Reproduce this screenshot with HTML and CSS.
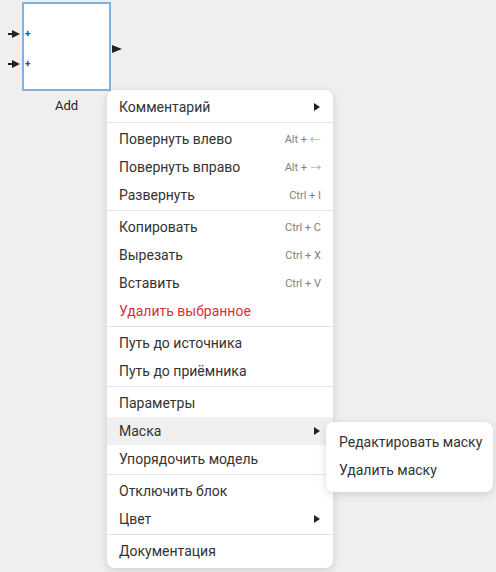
FILE: index.html
```html
<!DOCTYPE html>
<html>
<head>
<meta charset="utf-8">
<link rel="stylesheet" href="styles.css">
</head>
<body>
<div class="canvas">
  <div class="node">
    <div class="port port-in1"><span class="arrow-r"></span><span class="plus">+</span></div>
    <div class="port port-in2"><span class="arrow-r"></span><span class="plus">+</span></div>
    <div class="port port-out"><span class="arrow-r"></span></div>
    <div class="node-label">Add</div>
  </div>

  <div class="menu">
    <div class="item"><span>Комментарий</span><span class="tri"></span></div>
    <div class="sep"></div>
    <div class="item"><span>Повернуть влево</span><span class="kbd">Alt + <span class="ar">←</span></span></div>
    <div class="item"><span>Повернуть вправо</span><span class="kbd">Alt + <span class="ar">→</span></span></div>
    <div class="item"><span>Развернуть</span><span class="kbd">Ctrl + I</span></div>
    <div class="sep"></div>
    <div class="item"><span>Копировать</span><span class="kbd">Ctrl + C</span></div>
    <div class="item"><span>Вырезать</span><span class="kbd">Ctrl + X</span></div>
    <div class="item"><span>Вставить</span><span class="kbd">Ctrl + V</span></div>
    <div class="item danger"><span>Удалить выбранное</span></div>
    <div class="sep"></div>
    <div class="item"><span>Путь до источника</span></div>
    <div class="item"><span>Путь до приёмника</span></div>
    <div class="sep"></div>
    <div class="item"><span>Параметры</span></div>
    <div class="item active"><span>Маска</span><span class="tri"></span></div>
    <div class="item"><span>Упорядочить модель</span></div>
    <div class="sep"></div>
    <div class="item"><span>Отключить блок</span></div>
    <div class="item"><span>Цвет</span><span class="tri"></span></div>
    <div class="sep"></div>
    <div class="item"><span>Документация</span></div>
  </div>

  <div class="submenu">
    <div class="item"><span>Редактировать маску</span></div>
    <div class="item"><span>Удалить маску</span></div>
  </div>
</div>
</body>
</html>
```

FILE: styles.css
```css
html, body {
  margin: 0;
  padding: 0;
}
body {
  background: #efefef;
  font-family: Roboto, "Noto Sans", sans-serif;
  color: #333;
}
.canvas {
  position: relative;
  width: 496px;
  height: 572px;
  overflow: hidden;
}
.node {
  position: absolute;
  left: 22px;
  top: 2px;
  width: 85px;
  height: 85px;
  background: #fff;
  border: 2px solid #80b4de;
}
.port {
  position: absolute;
  display: flex;
  align-items: center;
  height: 10px;
}
.port-in1 { left: -12px; top: 25px; }
.port-in2 { left: -12px; top: 55px; }
.port-out { left: 88px; top: 40px; }
.arrow-r {
  display: block;
  width: 0;
  height: 0;
  border-left: 10px solid #222;
  border-top: 4px solid transparent;
  border-bottom: 4px solid transparent;
}
.port-in1 .arrow-r, .port-in2 .arrow-r {
  border-left-width: 8px;
  position: relative;
}
.port-in1 .arrow-r::before, .port-in2 .arrow-r::before {
  content: "";
  position: absolute;
  left: -12px;
  top: -1px;
  width: 5px;
  height: 2px;
  background: #222;
}
.plus {
  font-size: 10px;
  line-height: 10px;
  color: #1a4f8a;
  margin-left: 5px;
  font-weight: bold;
}
.node-label {
  position: absolute;
  left: 0;
  right: 0;
  top: 94px;
  text-align: center;
  font-size: 13px;
  color: #222;
}
.menu {
  position: absolute;
  left: 107px;
  top: 90px;
  width: 226px;
  padding: 3px 0 3px;
  background: #fff;
  border-radius: 8px;
  box-shadow: 0 2px 8px rgba(0,0,0,0.14);
  box-sizing: border-box;
}
.item {
  height: 28px;
  display: flex;
  align-items: center;
  justify-content: space-between;
  padding: 0 12px;
  font-size: 14px;
  color: #333;
  white-space: nowrap;
}
.item.active {
  background: #f0f0f0;
}
.item.danger {
  color: #d8303c;
}
.sep {
  height: 1px;
  margin: 1px 0 2px;
  background: #e4e4e4;
}
.kbd {
  font-size: 11px;
  color: #808080;
  display: flex;
  align-items: center;
}
.ar {
  font-family: "DejaVu Sans", sans-serif;
  font-size: 13px;
  font-weight: 200;
  margin-left: 3px;
  color: #999;
}
.tri {
  width: 0;
  height: 0;
  border-left: 6px solid #222;
  border-top: 4px solid transparent;
  border-bottom: 4px solid transparent;
  margin-right: 1px;
}
.submenu {
  position: absolute;
  left: 326px;
  top: 422px;
  width: 167px;
  padding: 6px 0 8px;
  background: #fff;
  border-radius: 8px;
  box-shadow: 0 2px 8px rgba(0,0,0,0.14);
  box-sizing: border-box;
}
.submenu .item {
  padding: 0 13px;
}
```
